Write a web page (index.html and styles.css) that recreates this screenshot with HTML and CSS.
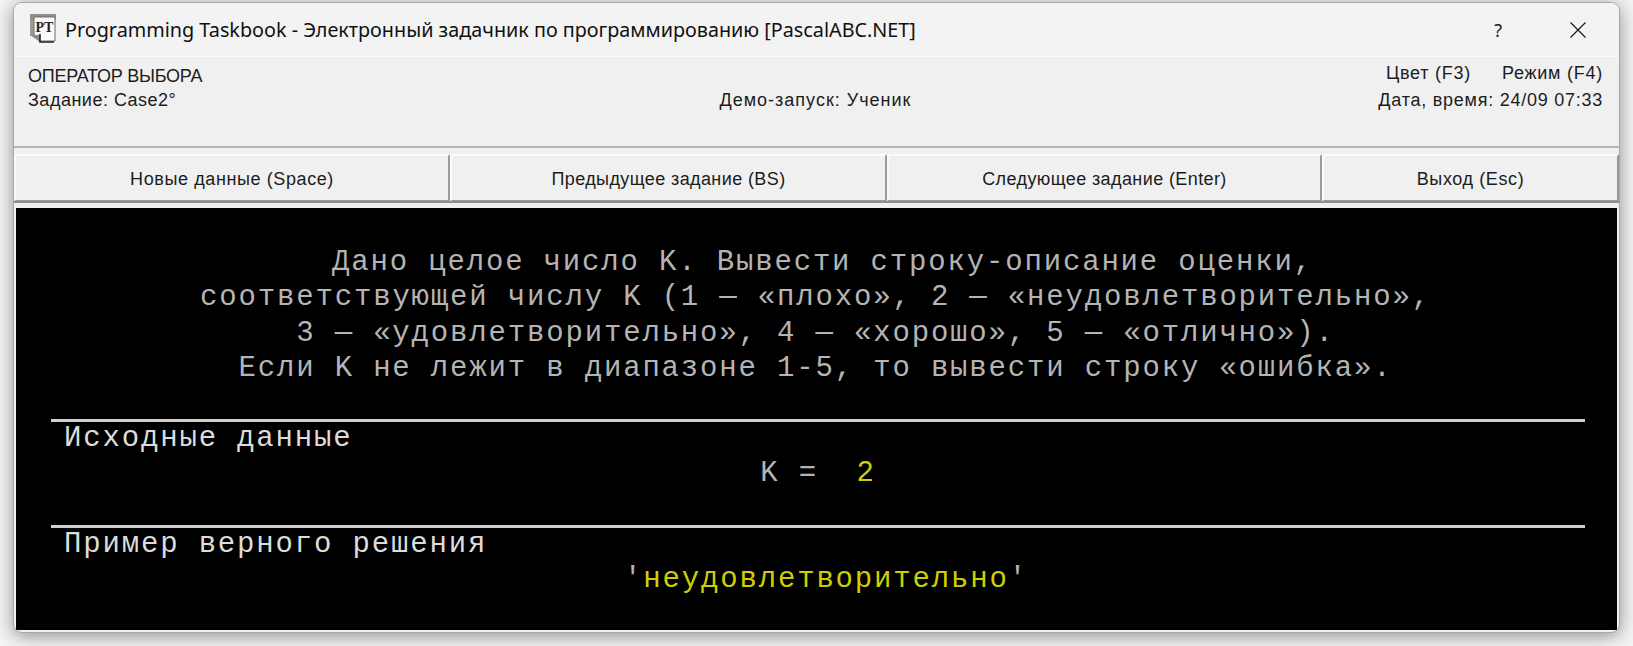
FILE: index.html
```html
<!DOCTYPE html>
<html lang="ru">
<head>
<meta charset="utf-8">
<title>Programming Taskbook</title>
<link rel="stylesheet" href="styles.css">
</head>
<body>
<div class="window">
  <header class="titlebar">
    <span class="app-icon">
      <svg width="26" height="30" viewBox="0 0 26 30">
        <rect x="0" y="0" width="26" height="6" fill="#8f8f8f"/>
        <path d="M0 6H4V22H0Z" fill="#9a9a9a"/>
        <path d="M4 3H25V27H11L4 21Z" fill="#fafafa" stroke="#6d6d6d" stroke-width="1"/>
        <path d="M0 21H10V28Z" fill="#8a8a8a"/>
        <path d="M10 20V28H24" fill="none" stroke="#222" stroke-width="1.6"/>
        <text x="14.5" y="18" class="app-icon-text">PT</text>
      </svg>
    </span>
    <span class="title">Programming Taskbook - Электронный задачник по программированию [PascalABC.NET]</span>
    <span class="help">?</span>
    <span class="close">
      <svg width="16" height="16" viewBox="0 0 16 16"><path d="M0.5 0.5L15.5 15.5M15.5 0.5L0.5 15.5" stroke="#1a1a1a" stroke-width="1.2" fill="none"/></svg>
    </span>
  </header>

  <section class="info">
    <div class="info-left">
      <div class="heading">ОПЕРАТОР ВЫБОРА</div>
      <div>Задание: Case2°</div>
    </div>
    <div class="info-center">Демо-запуск: Ученик</div>
    <div class="info-right">
      <div class="info-links"><span>Цвет (F3)</span><span>Режим (F4)</span></div>
      <div>Дата, время: 24/09 07:33</div>
    </div>
  </section>

  <nav class="toolbar">
    <button class="tool-btn">Новые данные (Space)</button>
    <button class="tool-btn tool-btn-tight">Предыдущее задание (BS)</button>
    <button class="tool-btn tool-btn-tight">Следующее задание (Enter)</button>
    <button class="tool-btn">Выход (Esc)</button>
  </nav>

  <main class="console">
    <div class="task">
      <div class="line-shift">Дано целое число K. Вывести строку-описание оценки,</div>
      <div>соответствующей числу K (1 — «плохо», 2 — «неудовлетворительно»,</div>
      <div>3 — «удовлетворительно», 4 — «хорошо», 5 — «отлично»).</div>
      <div>Если K не лежит в диапазоне 1-5, то вывести строку «ошибка».</div>
    </div>
    <section class="block block-input">
      <div class="block-title">Исходные данные</div>
      <div class="value">K = <span class="yellow">&nbsp;2</span></div>
    </section>
    <section class="block block-output">
      <div class="block-title">Пример верного решения</div>
      <div class="value value-shift">'<span class="yellow">неудовлетворительно</span>'</div>
    </section>
  </main>
</div>
</body>
</html>
```

FILE: styles.css
```css
* { box-sizing: border-box; }

html, body {
  margin: 0;
  height: 646px;
  overflow: hidden;
}

body {
  background: #f4f4f4;
  padding: 2px 13px 0;
}

.window {
  width: 1607px;
  height: 631px;
  background: #f0f0f0;
  border-radius: 9px;
  border: 1px solid #a8a8a8;
  box-shadow: 0 3px 18px rgba(0, 0, 0, 0.42);
  display: flex;
  flex-direction: column;
  overflow: hidden;
  font-family: "Liberation Sans", Arial, sans-serif;
  color: #1c1c1c;
}

.titlebar {
  height: 54px;
  flex: none;
  background: #f3f3f3;
  border-bottom: 1px solid #fbfbfb;
  display: flex;
  align-items: center;
  padding: 0 33px 0 16px;
}

.app-icon {
  display: flex;
  width: 26px;
  margin-right: 9px;
  margin-top: -1px;
}

.app-icon-text {
  font-family: "Liberation Serif", serif;
  font-weight: 700;
  font-size: 14px;
  text-anchor: middle;
  fill: #222;
}

.title {
  font-family: "Noto Sans", sans-serif;
  font-size: 19.8px;
  color: #111;
  flex: 1;
  white-space: nowrap;
}

.help {
  font-family: "Noto Sans", sans-serif;
  font-size: 18px;
  margin-right: 68px;
  color: #222;
}

.close {
  display: flex;
}

.info {
  height: 91px;
  flex: none;
  display: grid;
  grid-template-columns: 1fr auto 1fr;
  padding: 7px 16px 0 14px;
  font-size: 18px;
  letter-spacing: 0.5px;
  line-height: 24px;
  border-bottom: 2px solid #b4b4b4;
}

.heading {
  letter-spacing: -0.25px;
}

.info-center {
  padding-top: 24px;
  letter-spacing: 1px;
}

.info-right {
  text-align: right;
  letter-spacing: 0.75px;
}

.info-links {
  display: flex;
  justify-content: flex-end;
  gap: 31px;
  margin: -3px 0 3px;
}

.toolbar {
  margin-top: 6px;
  height: 49px;
  flex: none;
  display: grid;
  grid-template-columns: 436px 437px 435px 1fr;
  border-bottom: 2px solid #8e8e8e;
}

.tool-btn {
  font: inherit;
  font-size: 18px;
  letter-spacing: 0.6px;
  color: #1c1c1c;
  background: #f0f0f0;
  border: 0;
  border-top: 2px solid #fbfbfb;
  border-left: 2px solid #fbfbfb;
  border-right: 2px solid #9a9a9a;
  border-bottom: 1px solid #9a9a9a;
  padding: 2px 0 0;
}

.tool-btn-tight {
  letter-spacing: 0.4px;
}

.console {
  margin: 5px 2px 2px;
  flex: 1;
  background: #000;
  color: #b4b4b4;
  font-family: "Liberation Mono", "Courier New", monospace;
  font-size: 29px;
  letter-spacing: 1.83px;
  line-height: 35.4px;
  padding: 37px 32px 0 35px;
}

.task {
  text-align: center;
  height: 174px;
  padding-right: 5px;
}

.line-shift {
  padding-left: 14px;
}

.block {
  border-top: 3px solid #cfcfcf;
}

.block-input {
  height: 106px;
}

.block-title {
  padding-left: 13px;
  color: #dcdcdc;
  line-height: 33px;
}

.value {
  text-align: center;
  padding-top: 1px;
}

.value-shift {
  padding-left: 16px;
}

.yellow {
  color: #cfcf00;
}
```
